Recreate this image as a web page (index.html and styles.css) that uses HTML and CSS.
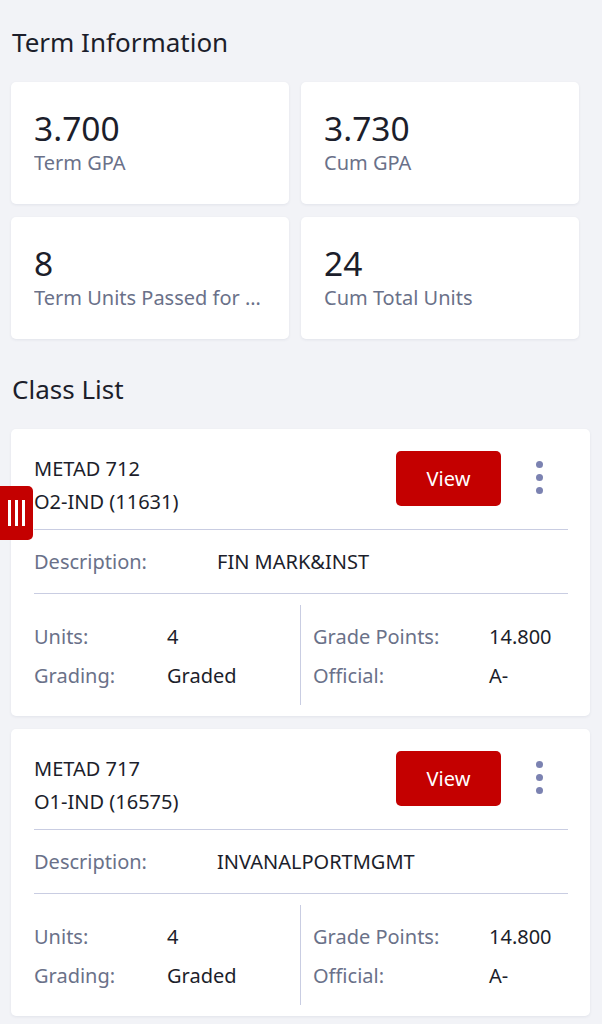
FILE: index.html
```html
<!DOCTYPE html>
<html>
<head>
    <meta charset="UTF-8">
    <meta name="viewport" content="width=device-width, initial-scale=1.0">
    <title>Term Information</title>
    <link rel="stylesheet" href="styles.css">
</head>
<body>
    <div class="page">
        <h2 class="section-title">Term Information</h2>
        <div class="stats">
            <div class="stat-card">
                <div class="stat-value">3.700</div>
                <div class="stat-label">Term GPA</div>
            </div>
            <div class="stat-card">
                <div class="stat-value">3.730</div>
                <div class="stat-label">Cum GPA</div>
            </div>
            <div class="stat-card">
                <div class="stat-value">8</div>
                <div class="stat-label">Term Units Passed for GPA</div>
            </div>
            <div class="stat-card">
                <div class="stat-value">24</div>
                <div class="stat-label">Cum Total Units</div>
            </div>
        </div>

        <h2 class="section-title list-title">Class List</h2>

        <div class="class-card">
            <div class="class-head">
                <div class="class-name">
                    <div>METAD 712</div>
                    <div>O2-IND (11631)</div>
                </div>
                <button class="view-button">View</button>
                <div class="kebab"><span></span><span></span><span></span></div>
            </div>
            <div class="desc-row">
                <span class="label desc-label">Description:</span>
                <span class="value">FIN MARK&amp;INST</span>
            </div>
            <div class="detail-grid">
                <div class="detail-col">
                    <div class="detail-row"><span class="label">Units:</span><span class="value">4</span></div>
                    <div class="detail-row"><span class="label">Grading:</span><span class="value">Graded</span></div>
                </div>
                <div class="detail-col right">
                    <div class="detail-row"><span class="label">Grade Points:</span><span class="value">14.800</span></div>
                    <div class="detail-row"><span class="label">Official:</span><span class="value">A-</span></div>
                </div>
            </div>
        </div>

        <div class="class-card">
            <div class="class-head">
                <div class="class-name">
                    <div>METAD 717</div>
                    <div>O1-IND (16575)</div>
                </div>
                <button class="view-button">View</button>
                <div class="kebab"><span></span><span></span><span></span></div>
            </div>
            <div class="desc-row">
                <span class="label desc-label">Description:</span>
                <span class="value">INVANALPORTMGMT</span>
            </div>
            <div class="detail-grid">
                <div class="detail-col">
                    <div class="detail-row"><span class="label">Units:</span><span class="value">4</span></div>
                    <div class="detail-row"><span class="label">Grading:</span><span class="value">Graded</span></div>
                </div>
                <div class="detail-col right">
                    <div class="detail-row"><span class="label">Grade Points:</span><span class="value">14.800</span></div>
                    <div class="detail-row"><span class="label">Official:</span><span class="value">A-</span></div>
                </div>
            </div>
        </div>
    </div>

    <!-- side drawer handle -->
    <div class="drawer-tab"><span></span><span></span><span></span></div>
</body>
</html>
```

FILE: styles.css
```css
body {
    background-color: #f2f3f7;
    color: #1c1e2b;
    font-family: "Noto Sans", "Open Sans", sans-serif;
    margin: 0;
    padding: 0;
}

.page {
    padding: 22px 12px 20px 11px;
}

.section-title {
    font-size: 26px;
    font-weight: 400;
    margin: 0 0 20px 1px;
    line-height: 40px;
}

.list-title {
    margin-top: 30px;
    margin-bottom: 20px;
}

.stats {
    display: grid;
    grid-template-columns: minmax(0, 1fr) minmax(0, 1fr);
    gap: 13px 12px;
    margin-right: 11px;
}

.stat-card {
    background-color: #fff;
    border-radius: 5px;
    box-shadow: 0 1px 3px rgba(40, 50, 90, 0.08);
    height: 122px;
    box-sizing: border-box;
    padding: 24px 23px 0 23px;
}

.stat-value {
    font-size: 33.5px;
    line-height: 44px;
}

.stat-label {
    font-size: 20px;
    line-height: 26px;
    color: #6a7189;
    white-space: nowrap;
    overflow: hidden;
    text-overflow: ellipsis;
}

.class-card {
    background-color: #fff;
    border-radius: 5px;
    box-shadow: 0 1px 3px rgba(40, 50, 90, 0.08);
    padding: 0 22px 0 23px;
    margin-bottom: 13px;
}

.class-head {
    display: flex;
    align-items: flex-start;
    padding-top: 23px;
    height: 77px;
    border-bottom: 1.5px solid #c9cde2;
}

.class-name {
    flex: 1;
    font-size: 20px;
    line-height: 33px;
}

.view-button {
    background-color: #c40000;
    color: #fff;
    border: none;
    border-radius: 5px;
    width: 105px;
    height: 55px;
    margin-top: -1px;
    font-family: inherit;
    font-size: 20px;
    cursor: pointer;
}

.kebab {
    width: 30px;
    margin: 9px 14px 0 23px;
    display: flex;
    flex-direction: column;
    align-items: center;
    gap: 6px;
}

.kebab span {
    width: 7px;
    height: 7px;
    border-radius: 50%;
    background-color: #7b82b1;
}

.label {
    color: #6a7189;
}

.value {
    color: #1c1e2b;
}

.desc-row {
    display: flex;
    align-items: center;
    height: 63px;
    font-size: 20px;
    border-bottom: 1.5px solid #c9cde2;
}

.desc-label {
    width: 183px;
}

.detail-grid {
    display: grid;
    grid-template-columns: 266px 1fr;
    padding: 11px 0 11px 0;
    font-size: 20px;
}

.detail-col {
    padding: 12px 0 10px 0;
}

.detail-col.right {
    border-left: 1.5px solid #c9cde2;
    padding-left: 12px;
}

.detail-row {
    display: flex;
    line-height: 39px;
}

.detail-col .label {
    width: 133px;
}

.detail-col.right .label {
    width: 176px;
}

.drawer-tab {
    position: absolute;
    left: 0;
    top: 486px;
    width: 33px;
    height: 54px;
    background-color: #c40000;
    border-radius: 0 5px 5px 0;
    display: flex;
    justify-content: center;
    align-items: center;
    gap: 4px;
}

.drawer-tab span {
    width: 3px;
    height: 26px;
    background-color: #fff;
}
```
